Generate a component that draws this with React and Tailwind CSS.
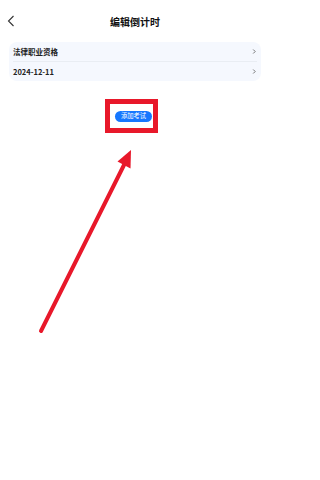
import React from "react";

const rows = [
  { label: "法律职业资格" },
  { label: "2024-12-11" },
];

function Chevron() {
  return (
    <svg width="5" height="7" viewBox="0 0 5 7" className="shrink-0">
      <path d="M1.2 1.5l2 2-2 2" fill="none" stroke="#666" strokeWidth="0.9" />
    </svg>
  );
}

export default function App() {
  return (
    <div
      className="relative w-[270px] h-[480px] bg-white overflow-hidden"
      style={{ fontFamily: '"Noto Sans CJK SC", "Noto Sans", sans-serif' }}
    >
      {/* header */}
      <div className="relative h-[42px] flex items-center justify-center">
        <svg
          width="8"
          height="12"
          viewBox="0 0 8 12"
          className="absolute left-[7px] top-[15px]"
        >
          <path d="M6.5 1L1.5 6l5 5" fill="none" stroke="#333" strokeWidth="1.1" />
        </svg>
        <span className="text-[10px] font-bold text-[#111]">编辑倒计时</span>
      </div>

      {/* card */}
      <div className="mx-[9px] rounded-[8px] bg-[#f5f8fe] px-[4px]">
        {rows.map((r, i) => (
          <div
            key={r.label}
            className={`h-[19.5px] flex items-center justify-between ${
              i === 0 ? "border-b border-[#e9edf3]" : ""
            }`}
          >
            <span className="text-[7.5px] font-bold text-[#222] leading-none">
              {r.label}
            </span>
            <Chevron />
          </div>
        ))}
      </div>

      {/* button highlighted */}
      <div className="mt-[18px] ml-[105px] w-[53px] h-[34px] border-[5px] border-[#e8182a] flex items-center">
        <button className="ml-[5px] w-[37px] h-[11px] rounded-full bg-[#1677ff] text-white text-[6.3px] leading-none flex items-center justify-center">
          添加考试
        </button>
      </div>

      {/* arrow annotation */}
      <svg
        className="absolute left-0 top-0 pointer-events-none"
        width="270"
        height="480"
        viewBox="0 0 270 480"
      >
        <line
          x1="41"
          y1="331"
          x2="125"
          y2="163"
          stroke="#e8182a"
          strokeWidth="4"
          strokeLinecap="round"
        />
        <polygon points="131,150 117.5,161.5 130.5,168.5" fill="#e8182a" />
      </svg>
    </div>
  );
}
